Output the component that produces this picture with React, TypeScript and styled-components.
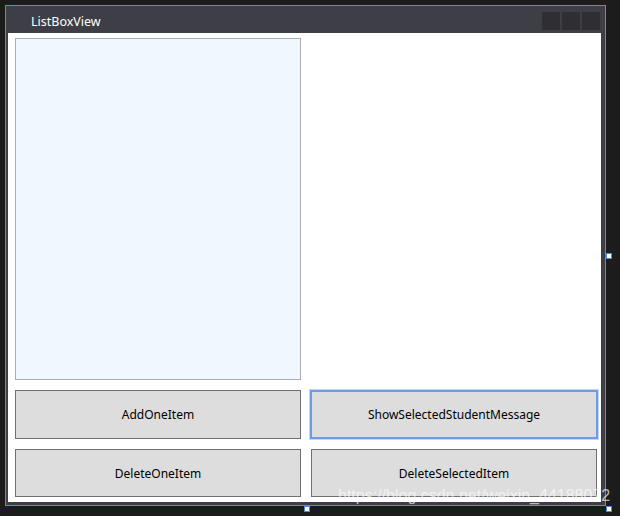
import React from 'react'
import styled, { createGlobalStyle } from 'styled-components'

const GlobalStyle = createGlobalStyle`
  html, body {
    margin: 0;
    background: #1c1c1c;
  }
  * {
    box-sizing: border-box;
  }
`

const Canvas = styled.div`
  position: relative;
  width: 620px;
  height: 516px;
  padding: 5px;
  overflow: hidden;
`

const SelectionFrame = styled.div`
  position: relative;
  width: 601px;
  height: 501px;
  border: 1px solid #5a8ad8;
`

const Handle = styled.span<{ left: number; top: number }>`
  position: absolute;
  width: 6px;
  height: 6px;
  background: #ffffff;
  border: 1px solid #4f86e0;
  left: ${({ left }) => left}px;
  top: ${({ top }) => top}px;
`

const Window = styled.div`
  height: 100%;
  display: flex;
  flex-direction: column;
  background: #3e3f46;
`

const TitleBar = styled.div`
  height: 27px;
  display: flex;
  align-items: center;
  padding: 0 5px 0 25px;
`

const Title = styled.span`
  flex: 1;
  color: #ffffff;
  font-family: 'Noto Sans', 'Open Sans', sans-serif;
  font-size: 12.5px;
  margin-top: 3px;
`

const CaptionButtons = styled.div`
  display: flex;
  gap: 2px;
  margin-top: 3px;
`

const CaptionButton = styled.div`
  width: 18px;
  height: 18px;
  background: #2e2e33;
`

const Client = styled.div`
  flex: 1;
  margin: 0 4px 3px 2px;
  background: #ffffff;
  padding: 5px 4px 5px 7px;
  display: grid;
  grid-template-columns: 1fr 1fr;
  grid-template-rows: 342px 49px 48px;
  column-gap: 10px;
  row-gap: 10px;
`

const ListBox = styled.div`
  border: 1px solid #abadb3;
  background: #f0f8ff;
`

const Button = styled.button<{ focused?: boolean }>`
  margin: ${({ focused }) => (focused ? '0 -1px' : '0')};
  background: #dddddd;
  border: ${({ focused }) => (focused ? '2px solid #6d9be8' : '1px solid #707070')};
  box-shadow: ${({ focused }) => (focused ? '0 0 0 1px #c3d6f6' : 'none')};
  color: #000000;
  font-family: 'Noto Sans', 'Open Sans', sans-serif;
  font-size: 12px;
  padding: 0;
  cursor: default;
  outline: none;
`

const Watermark = styled.span`
  position: absolute;
  left: 338px;
  top: 487px;
  color: rgba(255, 255, 255, 0.68);
  font-family: 'Liberation Sans', Arial, sans-serif;
  font-size: 16px;
  white-space: nowrap;
  pointer-events: none;
`

export default function App(): JSX.Element {
  return (
    <>
      <GlobalStyle />
      <Canvas>
        <SelectionFrame>
          <Window>
            <TitleBar>
              <Title>ListBoxView</Title>
              <CaptionButtons>
                <CaptionButton />
                <CaptionButton />
                <CaptionButton />
              </CaptionButtons>
            </TitleBar>
            <Client>
              <ListBox />
              <div />
              <Button>AddOneItem</Button>
              <Button focused>ShowSelectedStudentMessage</Button>
              <Button>DeleteOneItem</Button>
              <Button>DeleteSelectedItem</Button>
            </Client>
          </Window>
          <Handle left={600} top={247} />
          <Handle left={298} top={500} />
          <Handle left={600} top={500} />
        </SelectionFrame>
        <Watermark>https://blog.csdn.net/weixin_44188072</Watermark>
      </Canvas>
    </>
  )
}
